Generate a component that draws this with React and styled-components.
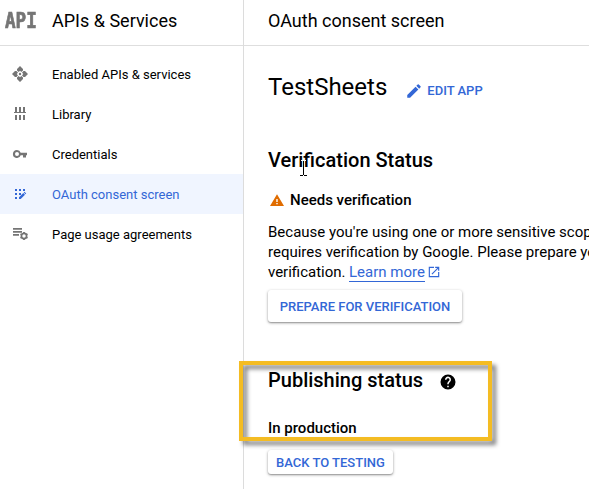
import React from 'react';
import styled, { createGlobalStyle } from 'styled-components';

const Global = createGlobalStyle`
  * { box-sizing: border-box; }
  body { margin: 0; overflow: hidden; background: #fff; color: #000; font-family: Roboto, sans-serif; }
`;

const blue = '#3367d6';

const Page = styled.div`
  position: relative;
  width: 589px;
  height: 489px;
  display: grid;
  grid-template-columns: 244px 1fr;
  overflow: hidden;
  background: #fff;
`;
const Sidebar = styled.aside`
  border-right: 1px solid #dcdcdc;
`;
const Header = styled.header`
  display: flex;
  align-items: center;
  height: 46px;
  padding: 0 0 4px ${p => p.$inset}px;
  border-bottom: 1px solid #dedede;
  font-size: 18px;
  white-space: nowrap;
`;
const Logo = styled.span`
  width: 47px;
  flex: none;
  color: #757575;
  font: bold 21px/22px "DejaVu Sans Mono", monospace;
  -webkit-text-stroke: 0.7px #757575;
  transform: scaleX(0.84);
  transform-origin: left;
`;
const Title = styled.span`
  white-space: nowrap;
`;
const Nav = styled.nav`
  padding-top: 8px;
`;
const NavItem = styled.a`
  display: flex;
  align-items: center;
  height: 40px;
  padding-left: 11px;
  gap: 23px;
  font-size: 13px;
  white-space: nowrap;
  color: ${p => (p.$active ? blue : '#000')};
  background: ${p => (p.$active ? '#f0f5ff' : 'transparent')};
  svg { color: ${p => (p.$active ? blue : '#757575')}; }
`;
const Icon = styled.svg`
  display: block;
  flex: none;
  width: ${p => p.$size}px;
  height: ${p => p.$size}px;
  fill: currentColor;
`;
const Main = styled.main`
  min-width: 0;
`;
const Content = styled.div`
  padding: 24px 0 0 24px;
`;
const AppRow = styled.div`
  display: flex;
  align-items: center;
  height: 34px;
  gap: 18px;
`;
const AppName = styled.h1`
  margin: 0;
  font-size: 24px;
  line-height: 32px;
  font-weight: 400;
`;
const EditLink = styled.a`
  display: flex;
  align-items: center;
  gap: 4px;
  padding-top: 7px;
  color: ${blue};
  font-size: 13px;
  font-weight: 500;
`;
const Heading = styled.h2`
  display: flex;
  align-items: center;
  gap: 16px;
  height: 28px;
  margin: ${p => p.$top}px 0 0;
  font-size: 20px;
  font-weight: 500;
  svg { margin-top: 3px; }
`;
const Status = styled.div`
  display: flex;
  align-items: center;
  gap: 4px;
  height: 20px;
  margin-top: ${p => p.$top}px;
  font-size: 15px;
  font-weight: 500;
`;
const Warning = styled.span`
  color: #e06c00;
`;
const Copy = styled.p`
  margin: 12px 0 0;
  font-size: 15px;
  line-height: 20px;
  white-space: nowrap;
`;
const Line = styled.span`
  display: flex;
  align-items: center;
  height: 20px;
`;
const Learn = styled.a`
  margin-left: 3.5px;
  margin-right: 2px;
  height: 20px;
  color: ${blue};
  border-bottom: 1px solid ${blue};
`;
const LinkIcon = styled.span`
  color: ${blue};
`;
const Button = styled.button`
  display: flex;
  align-items: center;
  justify-content: center;
  width: ${p => p.$width}px;
  height: ${p => p.$height}px;
  margin-top: ${p => p.$top}px;
  padding: 0;
  border: 0;
  border-radius: 3px;
  background: #fff;
  box-shadow: 0 1px 3px rgba(0, 0, 0, 0.38), 0 1px 1px rgba(0, 0, 0, 0.14);
  color: ${blue};
  font: 500 13px Roboto, sans-serif;
  white-space: nowrap;
`;
const Highlight = styled.div`
  position: absolute;
  left: 239px;
  top: 361px;
  width: 253px;
  height: 80px;
  border: 4px solid #f4bc23;
  filter: drop-shadow(4px 4px 2px rgba(0, 0, 0, 0.5));
  pointer-events: none;
`;
const Cursor = styled.svg`
  position: absolute;
  left: 300px;
  top: 160px;
  width: 7px;
  height: 16px;
`;

const Hub = () => (
  <Icon $size={18} viewBox="0 0 18 18">
    <path d="M9 1l3 3v1.500L10.300 7 9 5.700 7.700 7 6 5.500V4zM9 17l-3-3v-1.500L7.700 11 9 12.300l1.300-1.300 1.700 1.500V14zM1 9l3-3h1.500L7 7.700 5.700 9 7 10.300 5.500 12H4zM17 9l-3 3h-1.500L11 10.300 12.300 9 11 7.700 12.500 6H14z" />
    <circle cx="9" cy="9" r="1.200" />
  </Icon>
);
const Library = () => (
  <Icon $size={18} viewBox="0 0 18 18" shapeRendering="crispEdges">
    <path d="M4 2h2v5h2V2h2v5h2V2h2v5h1v1H3V7h1zM4 10h2v5H4zM8 10h2v5H8zM12 10h2v5h-2z" />
  </Icon>
);
const Key = () => (
  <Icon $size={18} viewBox="0 0 18 18">
    <path fillRule="evenodd" d="M6 5a4 4 0 1 0 3.700 5.300H12V12.500h3v-2.200h1V7.700H9.700A4 4 0 0 0 6 5zm0 2a2 2 0 1 1 0 4 2 2 0 0 1 0-4z" />
  </Icon>
);
const Consent = () => (
  <Icon $size={18} viewBox="0 0 18 18">
    <path d="M4 4h2v2H4zM8 4h2v2H8zM12 4h2v2h-2zM4 8h2v2H4zM8 8h2v2H8zM4 12h2v2H4zM8 12.300l4.300-4.300 1.700 1.700L9.700 14H8zM12.800 7.500l.7-.7 1.700 1.700-.7.7z" />
  </Icon>
);
const Agreement = () => (
  <Icon $size={18} viewBox="0 0 18 18">
    <path d="M2 3h9v1.700H2zM2 6h9v1.700H2zM2 9h6v1.700H2z" />
    <circle cx="13" cy="11" r="2.600" fill="none" stroke="currentColor" strokeWidth="1.700" />
    <path d="M12.100 7h1.800v1.500h-1.800zM12.100 13.500h1.800V15h-1.800zM9.100 9.700l.8-1.400 1.400.8-.8 1.400zM14.700 12.900l.8-1.400 1.400.8-.8 1.400zM9.100 12.300l1.400-.8.8 1.400-1.400.8zM14.700 9.100l1.400-.8.8 1.400-1.400.8z" />
  </Icon>
);

const items = [
  { label: 'Enabled APIs & services', Glyph: Hub },
  { label: 'Library', Glyph: Library },
  { label: 'Credentials', Glyph: Key },
  { label: 'OAuth consent screen', Glyph: Consent, active: true },
  { label: 'Page usage agreements', Glyph: Agreement },
];

export default function App() {
  return (
    <Page>
      <Global />
      <Sidebar>
        <Header $inset={5}>
          <Logo>API</Logo>
          <Title>APIs &amp; Services</Title>
        </Header>
        <Nav>
          {items.map(({ label, Glyph, active }) => (
            <NavItem key={label} $active={active}>
              <Glyph />
              {label}
            </NavItem>
          ))}
        </Nav>
      </Sidebar>
      <Main>
        <Header $inset={24}>
          <Title>OAuth consent screen</Title>
        </Header>
        <Content>
          <AppRow>
            <AppName>TestSheets</AppName>
            <EditLink>
              <Icon $size={18} viewBox="0 0 24 24">
                <path d="M3 17.250V21h3.750L17.810 9.940l-3.750-3.750zM20.710 7.040a1 1 0 0 0 0-1.410l-2.340-2.340a1 1 0 0 0-1.410 0l-1.830 1.830 3.750 3.750z" />
              </Icon>
              EDIT APP
            </EditLink>
          </AppRow>
          <Heading $top={42}>Verification Status</Heading>
          <Status $top={16}>
            <Warning>
              <Icon $size={18} viewBox="0 0 18 18">
                <path d="M2 15h14L9 3.300zM9.700 13.300H8.300V12h1.400zm0-2.300H8.300V8h1.400z" fillRule="evenodd" />
              </Icon>
            </Warning>
            Needs verification
          </Status>
          <Copy>
            <Line>Because you're using one or more sensitive scop</Line>
            <Line>requires verification by Google. Please prepare yo</Line>
            <Line>
              verification.
              <Learn>Learn more</Learn>
              <LinkIcon>
                <Icon $size={14} viewBox="0 0 24 24">
                  <path d="M19 19H5V5h7V3H3v18h18v-9h-2zM14 3v2h3.590l-9.830 9.830 1.410 1.410L19 6.410V10h2V3z" />
                </Icon>
              </LinkIcon>
            </Line>
          </Copy>
          <Button $width={194} $height={32} $top={8}>PREPARE FOR VERIFICATION</Button>
          <Heading $top={44}>
            Publishing status
            <Icon $size={18} viewBox="0 0 24 24">
              <path d="M12 2a10 10 0 1 0 0 20 10 10 0 0 0 0-20zm1 17h-2v-2h2zm2.070-7.750-.9.920C13.450 12.900 13 13.500 13 15h-2v-.5c0-1.100.45-2.100 1.170-2.830l1.240-1.260A2 2 0 1 0 10 9H8a4 4 0 1 1 7.070 2.250z" />
            </Icon>
          </Heading>
          <Status $top={24}>In production</Status>
          <Button $width={125} $height={24} $top={12}>BACK TO TESTING</Button>
        </Content>
      </Main>
      <Highlight />
      <Cursor viewBox="0 0 7 16" fill="none" shapeRendering="crispEdges">
        <path stroke="#000" d="M3.500 1v14M0 15.500h3M4 15.500h3" />
        <path stroke="#fff" d="M1 .5h2M4 .5h2" />
      </Cursor>
    </Page>
  );
}
